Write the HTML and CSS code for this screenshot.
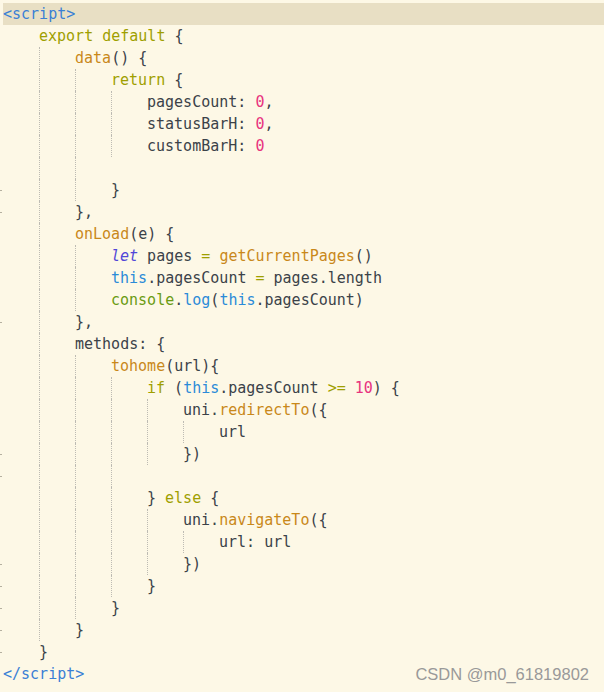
FILE: index.html
```html
<!DOCTYPE html>
<html>
<head>
<meta charset="utf-8">
<link rel="stylesheet" href="styles.css">
</head>
<body>
<div class="editor">
<div class="ln cur"><span class="t">&lt;script&gt;</span></div>
<div class="ln"><i class="u"></i><span class="k">export default</span> {</div>
<div class="ln"><i class="u"></i><i class="u"></i><span class="f">data</span>() {</div>
<div class="ln"><i class="u"></i><i class="u"></i><i class="u"></i><span class="k">return</span> {</div>
<div class="ln"><i class="u"></i><i class="u"></i><i class="u"></i><i class="u"></i>pagesCount: <span class="n">0</span>,</div>
<div class="ln"><i class="u"></i><i class="u"></i><i class="u"></i><i class="u"></i>statusBarH: <span class="n">0</span>,</div>
<div class="ln"><i class="u"></i><i class="u"></i><i class="u"></i><i class="u"></i>customBarH: <span class="n">0</span></div>
<div class="ln"><i class="u"></i><i class="u"></i><i class="u"></i></div>
<div class="ln tick"><i class="u"></i><i class="u"></i><i class="u"></i>}</div>
<div class="ln tick"><i class="u"></i><i class="u"></i>},</div>
<div class="ln"><i class="u"></i><i class="u"></i><span class="f">onLoad</span>(e) {</div>
<div class="ln"><i class="u"></i><i class="u"></i><i class="u"></i><span class="l">let</span> pages <span class="k">=</span> <span class="f">getCurrentPages</span>()</div>
<div class="ln"><i class="u"></i><i class="u"></i><i class="u"></i><span class="b">this</span>.pagesCount <span class="k">=</span> pages.length</div>
<div class="ln"><i class="u"></i><i class="u"></i><i class="u"></i><span class="c">console</span>.<span class="b">log</span>(<span class="b">this</span>.pagesCount)</div>
<div class="ln tick"><i class="u"></i><i class="u"></i>},</div>
<div class="ln"><i class="u"></i><i class="u"></i>methods: {</div>
<div class="ln"><i class="u"></i><i class="u"></i><i class="u"></i><span class="f">tohome</span>(url){</div>
<div class="ln"><i class="u"></i><i class="u"></i><i class="u"></i><i class="u"></i><span class="k">if</span> (<span class="b">this</span>.pagesCount <span class="k">&gt;=</span> <span class="n">10</span>) {</div>
<div class="ln"><i class="u"></i><i class="u"></i><i class="u"></i><i class="u"></i><i class="u"></i>uni.<span class="f">redirectTo</span>({</div>
<div class="ln"><i class="u"></i><i class="u"></i><i class="u"></i><i class="u"></i><i class="u"></i><i class="u"></i>url</div>
<div class="ln tick"><i class="u"></i><i class="u"></i><i class="u"></i><i class="u"></i><i class="u"></i>})</div>
<div class="ln tick"><i class="u"></i><i class="u"></i><i class="u"></i><i class="u"></i></div>
<div class="ln"><i class="u"></i><i class="u"></i><i class="u"></i><i class="u"></i>} <span class="k">else</span> {</div>
<div class="ln"><i class="u"></i><i class="u"></i><i class="u"></i><i class="u"></i><i class="u"></i>uni.<span class="f">navigateTo</span>({</div>
<div class="ln"><i class="u"></i><i class="u"></i><i class="u"></i><i class="u"></i><i class="u"></i><i class="u"></i>url: url</div>
<div class="ln tick"><i class="u"></i><i class="u"></i><i class="u"></i><i class="u"></i><i class="u"></i>})</div>
<div class="ln tick"><i class="u"></i><i class="u"></i><i class="u"></i><i class="u"></i>}</div>
<div class="ln tick"><i class="u"></i><i class="u"></i><i class="u"></i>}</div>
<div class="ln tick"><i class="u"></i><i class="u"></i>}</div>
<div class="ln tick"><i class="u"></i>}</div>
<div class="ln"><span class="t">&lt;/script&gt;</span></div>
</div>
<div class="wm">CSDN @m0_61819802</div>
</body>
</html>
```
FILE: styles.css
```css
html, body {
  margin: 0;
  padding: 0;
  background: #fdf8e6;
  width: 604px;
  height: 692px;
  overflow: hidden;
}
body {
  position: relative;
}
.editor {
  padding: 3px 0 0 3px;
  font-family: "DejaVu Sans Mono", "Liberation Mono", monospace;
  font-size: 15px;
  color: #3b4249;
}
.ln {
  position: relative;
  height: 22px;
  line-height: 22px;
  white-space: pre;
}
.cur {
  background: #e8dfc4;
}
.tick::before {
  content: "";
  position: absolute;
  left: -3px;
  top: 11px;
  width: 2px;
  height: 1px;
  background: #b5b0a0;
}
.u {
  display: inline-block;
  box-sizing: border-box;
  width: 36px;
  height: 22px;
  vertical-align: top;
}
.u + .u {
  border-left: 1px dotted #bdbbb3;
}
.t { color: #3a7fd5; }
.k { color: #9f9f00; }
.f { color: #c9881a; }
.n { color: #e8347e; }
.l { color: #5147d8; font-style: italic; }
.b { color: #2b8bd8; }
.c { color: #6a9b12; }
.wm {
  position: absolute;
  right: 15px;
  bottom: 8px;
  font-family: "Liberation Sans", Arial, sans-serif;
  font-size: 16.5px;
  color: #999999;
}
```
